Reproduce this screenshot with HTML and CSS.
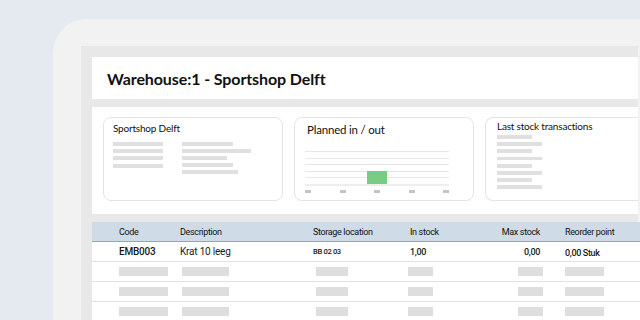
FILE: index.html
```html
<!DOCTYPE html>
<html>
<head>
<meta charset="utf-8">
<link rel="stylesheet" href="styles.css">
</head>
<body>
<div class="frame">
  <div class="app">
    <div class="header"><h1 class="title">Warehouse:1 - Sportshop Delft</h1></div>
    <div class="dash">
      <div class="card card-shop">
        <div class="card-title">Sportshop Delft</div>
        <div class="shop-cols">
          <div class="sk-col">
            <span class="sk w50"></span>
            <span class="sk w50"></span>
            <span class="sk w50"></span>
            <span class="sk w50 gap1"></span>
          </div>
          <div class="sk-col">
            <span class="sk w51"></span>
            <span class="sk w69"></span>
            <span class="sk w45"></span>
            <span class="sk w51"></span>
            <span class="sk w56"></span>
          </div>
        </div>
      </div>
      <div class="card card-plan">
        <div class="card-title big">Planned in / out</div>
        <div class="chart">
          <div class="gridline"></div>
          <div class="gridline"></div>
          <div class="gridline"></div>
          <div class="gridline"></div>
          <div class="gridline"></div>
          <div class="gridline base"></div>
          <div class="bar"></div>
        </div>
        <div class="ticks">
          <span class="tick"></span><span class="tick"></span><span class="tick"></span><span class="tick"></span><span class="tick"></span>
        </div>
      </div>
      <div class="card card-trans">
        <div class="card-title">Last stock transactions</div>
        <div class="sk-list">
          <span class="sk t35"></span>
          <span class="sk t45"></span>
          <span class="sk t35"></span>
          <span class="sk t45"></span>
          <span class="sk t35"></span>
          <span class="sk t45"></span>
          <span class="sk t35"></span>
          <span class="sk t45"></span>
        </div>
      </div>
    </div>
    <div class="table">
      <div class="row head">
        <div class="c">Code</div>
        <div class="c">Description</div>
        <div class="c">Storage location</div>
        <div class="c">In stock</div>
        <div class="c right">Max stock</div>
        <div class="c last">Reorder point</div>
      </div>
      <div class="row">
        <div class="c big strong">EMB003</div>
        <div class="c big">Krat 10 leeg</div>
        <div class="c small">BB 02 03</div>
        <div class="c">1,00</div>
        <div class="c right">0,00</div>
        <div class="c last low">0,00 Stuk</div>
      </div>
      <div class="row">
        <div class="c"><span class="rb b-code"></span></div>
        <div class="c"><span class="rb b-desc"></span></div>
        <div class="c"><span class="rb b-loc"></span></div>
        <div class="c"><span class="rb b-in"></span></div>
        <div class="c right"><span class="rb b-max"></span></div>
        <div class="c last"><span class="rb b-re"></span></div>
      </div>
      <div class="row">
        <div class="c"><span class="rb b-code"></span></div>
        <div class="c"><span class="rb b-desc"></span></div>
        <div class="c"><span class="rb b-loc"></span></div>
        <div class="c"><span class="rb b-in"></span></div>
        <div class="c right"><span class="rb b-max"></span></div>
        <div class="c last"><span class="rb b-re"></span></div>
      </div>
      <div class="row">
        <div class="c"><span class="rb b-code"></span></div>
        <div class="c"><span class="rb b-desc"></span></div>
        <div class="c"><span class="rb b-loc"></span></div>
        <div class="c"><span class="rb b-in"></span></div>
        <div class="c right"><span class="rb b-max"></span></div>
        <div class="c last"><span class="rb b-re"></span></div>
      </div>
    </div>
  </div>
</div>
</body>
</html>
```
FILE: styles.css
```css
* { box-sizing: border-box; }
html, body {
  margin: 0;
  padding: 0;
  width: 640px;
  height: 320px;
  overflow: hidden;
  background: #e5eaf1;
  font-family: "Lato", "Liberation Sans", sans-serif;
  color: #111;
}
.frame {
  margin: 19px 0 0 53px;
  padding: 27px 0 0 28px;
  height: 301px;
  background: #f2f2f2;
  border-top-left-radius: 34px;
  overflow: hidden;
}
.app {
  width: 557px;
  height: 274px;
  background: #e8e8e8;
  padding: 11px 0 0 11px;
}
.header {
  height: 42px;
  background: #fff;
  display: flex;
  align-items: center;
  padding-left: 15px;
}
.title {
  margin: 0;
  font-size: 16px;
  font-weight: 700;
  letter-spacing: -0.1px;
  color: #111;
}
.dash {
  margin-top: 8px;
  height: 107px;
  background: #fff;
  padding: 10px 0 0 11px;
  display: flex;
  gap: 11px;
  overflow: hidden;
}
.card {
  flex: none;
  width: 180px;
  height: 84px;
  border: 1px solid #e4e4e4;
  border-radius: 8px;
  padding: 4px 0 0 9px;
}
.card-trans { width: 170px; border-right: none; border-radius: 8px 0 0 8px; padding: 2px 0 0 11px; }
.card-title {
  font-size: 10px;
  line-height: 13px;
  color: #111;
  letter-spacing: -0.2px;
}
.card-title.big { font-size: 11.5px; line-height: 15px; padding-left: 3px; }
.sk {
  display: block;
  height: 4px;
  background: #e0e0e0;
}
.shop-cols {
  display: flex;
  gap: 19px;
  margin-top: 7px;
}
.sk-col { display: flex; flex-direction: column; gap: 3px; }
.gap1 { margin-top: 1px; }
.w50 { width: 50px; }
.w51 { width: 51px; }
.w69 { width: 69px; }
.w45 { width: 45px; }
.w56 { width: 56px; }
.chart {
  position: relative;
  margin: 14px 0 0 1px;
  width: 144px;
  display: flex;
  flex-direction: column;
  gap: 5.5px;
}
.gridline { height: 1px; background: #e6e6e6; }
.gridline.base { height: 2px; background: #eeeeee; }
.bar {
  position: absolute;
  left: 62px;
  top: 20px;
  width: 20px;
  height: 13px;
  background: #78cc86;
}
.ticks {
  display: flex;
  justify-content: space-between;
  width: 144px;
  margin: 4px 0 0 1px;
}
.tick { width: 6px; height: 3px; background: #c4c4c4; }
.sk-list {
  display: flex;
  flex-direction: column;
  gap: 3.4px;
  margin-top: 2px;
}
.sk-list .sk { height: 3.8px; }
.t35 { width: 35px; }
.t45 { width: 45px; }
.table {
  margin-top: 8px;
  width: 560px;
  background: #fff;
  height: 110px;
}
.row {
  display: grid;
  grid-template-columns: 61px 133px 97px 80px 50px 90px;
  padding-left: 27px;
  height: 20px;
  align-items: center;
  border-bottom: 1px solid #e2e2e2;
  font-family: "Roboto", "Liberation Sans", sans-serif;
  font-weight: 500;
  font-size: 9px;
  letter-spacing: -0.35px;
  color: #1a1a1a;
}
.row.head {
  height: 20px;
  background: #cfdbe6;
  border-bottom: 1px solid #91a7ba;
  padding-top: 1px;
  font-weight: 400;
  color: #111;
}
.c { white-space: nowrap; }
.c.right { text-align: right; }
.c.last { padding-left: 25px; }
.c.big { font-size: 10px; letter-spacing: -0.2px; font-weight: 400; }
.c.big.strong { font-weight: 500; }
.c.small { font-size: 7.6px; }
.c.low { padding-top: 3px; }
.rb { display: block; height: 9px; background: #dedede; }
.b-code { width: 49px; }
.b-desc { width: 47px; margin-left: 2px; }
.b-loc { width: 32px; margin-left: 3px; }
.b-in { width: 25px; margin-left: -2px; }
.b-max { width: 25px; margin-left: auto; margin-right: -3px; }
.b-re { width: 39px; }
```
